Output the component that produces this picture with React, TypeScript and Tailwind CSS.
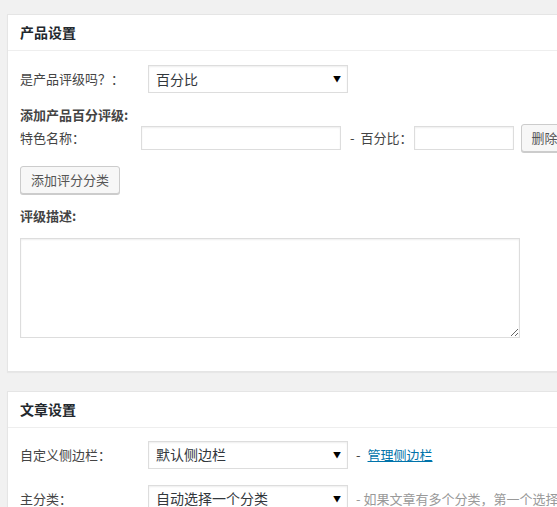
import { ReactNode } from 'react';

const font = { fontFamily: '"Noto Sans CJK SC", "Liberation Sans", sans-serif' };

const Select = ({ value }: { value: string }) => (
    <div className="shrink-0 flex items-center justify-between w-[200px] h-[28px] border border-[#ddd] bg-white pl-[7px] pr-[6px] text-[14px] text-[#32373c] shadow-[inset_0_1px_2px_rgba(0,0,0,0.07)]">
        <span>{value}</span>
        <span className="text-[8px] text-black">▼</span>
    </div>
);

const Button = ({ children, className = '' }: { children: ReactNode; className?: string }) => (
    <button className={`shrink-0 h-[28px] px-[10px] border border-[#ccc] rounded-[3px] bg-[#f7f7f7] text-[13px] text-[#555] shadow-[0_1px_0_#ccc] ${className}`}>
        {children}
    </button>
);

const Input = ({ width }: { width: string }) => (
    <div className={`shrink-0 ${width} h-[24px] border border-[#ddd] bg-white shadow-[inset_0_1px_2px_rgba(0,0,0,0.07)]`} />
);

const Panel = ({ title, children }: { title: string; children: ReactNode }) => (
    <div className="w-[600px] bg-white border border-[#e5e5e5] shadow-[0_1px_1px_rgba(0,0,0,0.04)]">
        <div className="h-[36px] flex items-center px-[12px] border-b border-[#eee] text-[14px] font-bold text-[#23282d]">
            {title}
        </div>
        {children}
    </div>
);

export default function App() {
    return (
        <div className="h-[507px] overflow-hidden bg-[#f1f1f1] pt-[14px] pl-[7px] text-[13px] text-[#444]" style={font}>
            <Panel title="产品设置">
                <div className="px-[12px] pt-[14px] pb-[33px]">
                    <div className="flex items-center">
                        <span className="w-[128px] shrink-0">是产品评级吗？：</span>
                        <Select value="百分比" />
                    </div>
                    <div className="mt-[13px] font-bold leading-[18px]">添加产品百分评级:</div>
                    <div className="flex items-center">
                        <span className="w-[121px] shrink-0">特色名称：</span>
                        <Input width="w-[200px]" />
                        <span className="ml-[9px]">-</span>
                        <span className="ml-[6px] w-[53px] shrink-0">百分比：</span>
                        <Input width="w-[100px]" />
                        <Button className="ml-[7px]">删除</Button>
                    </div>
                    <Button className="mt-[14px] w-[100px] px-0">添加评分分类</Button>
                    <div className="mt-[12px] font-bold">评级描述:</div>
                    <textarea className="block mt-[12px] w-[500px] h-[100px] border border-[#ddd] bg-white shadow-[inset_0_1px_2px_rgba(0,0,0,0.07)]" />
                </div>
            </Panel>
            <div className="h-[19px]" />
            <Panel title="文章设置">
                <div className="px-[12px] pt-[13px] pb-[20px]">
                    <div className="flex items-center">
                        <span className="w-[128px] shrink-0">自定义侧边栏：</span>
                        <Select value="默认侧边栏" />
                        <span className="ml-[8px]">-</span>
                        <a href="#" className="ml-[7px] text-[#0073aa] underline">管理侧边栏</a>
                    </div>
                    <div className="flex items-center mt-[16px]">
                        <span className="w-[128px] shrink-0">主分类：</span>
                        <Select value="自动选择一个分类" />
                        <span className="ml-[8px] text-[#999] whitespace-nowrap">- 如果文章有多个分类，第一个选择的分类将作为主分类</span>
                    </div>
                </div>
            </Panel>
        </div>
    );
}
